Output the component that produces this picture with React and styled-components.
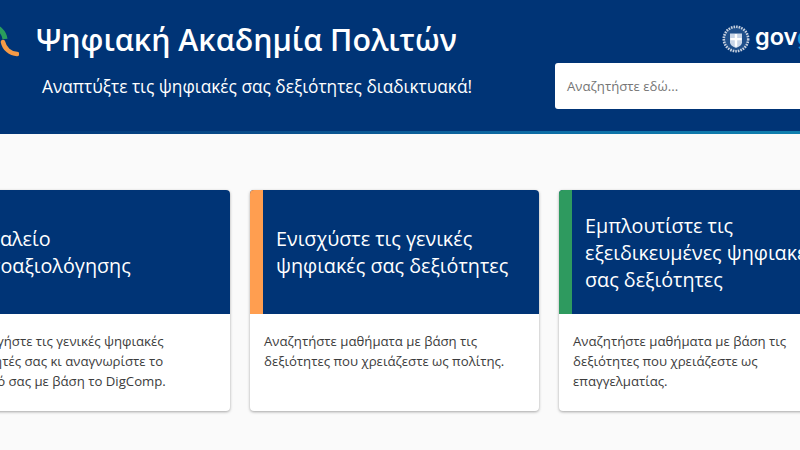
import React from "react";
import styled, { createGlobalStyle } from "styled-components";

const Global = createGlobalStyle`
  html, body { margin: 0; padding: 0; background: #fafafa; width: 800px; height: 450px; overflow: hidden; }
  body { font-family: "Open Sans", "Noto Sans", sans-serif; }
`;
const Viewport = styled.div`width: 800px; height: 450px; overflow: hidden; background: #fafafa;`;
const Header = styled.header`
  height: 131px;
  background: #003476;
  border-bottom: 3px solid;
  border-image: linear-gradient(90deg, #003476 0%, #0a4f8c 35%, #0d6ea6 70%, #0f7fae 100%) 1;
  overflow: hidden;
`;
const HeaderInner = styled.div`
  width: 907px;
  margin-left: -59px;
  display: flex;
  justify-content: space-between;
`;
const Brand = styled.div`display: flex; flex-direction: column; padding-top: 19px;`;
const TitleRow = styled.div`display: flex; align-items: center; gap: 17px; height: 42px; padding-left: 42px;`;
const Title = styled.h1`
  margin: 0; font-size: 30.3px; line-height: 42px; font-weight: 600; color: #fff; white-space: nowrap;
`;
const Tagline = styled.p`
  margin: 14px 0 0 101px; font-size: 17.3px; line-height: 24px; color: #fff; white-space: nowrap;
`;
const Side = styled.div`width: 294px; padding-top: 24px; margin-right: -1px;`;
const Gov = styled.div`display: flex; align-items: center; gap: 5px; padding-left: 167px; height: 30px;`;
const GovText = styled.span`
  font-family: "Inter", "Open Sans", sans-serif; font-size: 23.5px; line-height: 28px; font-weight: 600; color: #fff; margin-top: -5px;
  & > b { color: #1a9ad6; font-weight: 600; }
`;
const Search = styled.div`
  margin-top: 9px; height: 46px; background: #fff; border-radius: 3px; display: flex; align-items: center;
  padding-left: 12px; font-size: 13.2px; color: #757575;
`;
const Cards = styled.main`
  width: 907px; margin: 56px 0 0 -59px; display: grid; grid-template-columns: repeat(3, 289px); gap: 20px;
`;
const Card = styled.article`
  height: 221px; background: #fff; border-radius: 4px; overflow: hidden;
  box-shadow: 0 1px 3px rgba(0,0,0,.35);
  display: flex; flex-direction: column;
`;
const CardTop = styled.div`
  height: 124px; background: #003476; border-left: 13px solid ${p => p.$accent};
  display: flex; align-items: center; padding-left: 13px; box-sizing: border-box;
`;
const CardTitle = styled.h2`
  margin: 0; font-size: 19.75px; line-height: 27px; font-weight: 400; color: #fff; white-space: nowrap;
`;
const CardBody = styled.p`
  margin: 0; padding: 17px 14px; font-size: 13.2px; line-height: 20px; color: #3c3c3c; white-space: nowrap;
`;

const Logo = () => (
  <svg width="36" height="42" viewBox="0 0 36 42" style={{ flexShrink: 0 }}>
    <path d="M8 7 A 15 15 0 0 1 22 20" fill="none" stroke="#2a9d5c" strokeWidth="5" />
    <path d="M20 23 A 15 15 0 0 0 34 35" fill="none" stroke="#f59a46" strokeWidth="4.5" strokeLinecap="round" />
  </svg>
);
const Emblem = () => (
  <svg width="28" height="28" viewBox="0 0 28 28" style={{ flexShrink: 0 }}>
    <circle cx="14" cy="14" r="12.2" fill="#1f4f8a" stroke="#c6d0df" strokeWidth="2.6" strokeDasharray="1.6 1" />
    <path d="M8 8.5h12v9q0 3-6 5.5q-6-2.500-6-5.500z" fill="#c9d6e8" />
    <path d="M12.800 9h2.400v4h4.500v2.300h-4.500v6.500h-2.400v-6.500h-4.500v-2.300h4.500z" fill="#fff" />
  </svg>
);

const data = [
  { accent: "#003476", title: ["Εργαλείο", "αυτοαξιολόγησης"], body: ["Αξιολογήστε τις γενικές ψηφιακές", "δεξιότητές σας κι αναγνωρίστε το", "επίπεδό σας με βάση το DigComp."] },
  { accent: "#ff9e50", title: ["Ενισχύστε τις γενικές", "ψηφιακές σας δεξιότητες"], body: ["Αναζητήστε μαθήματα με βάση τις", "δεξιότητες που χρειάζεστε ως πολίτης."] },
  { accent: "#2e9a5f", title: ["Εμπλουτίστε τις", "εξειδικευμένες ψηφιακές", "σας δεξιότητες"], body: ["Αναζητήστε μαθήματα με βάση τις", "δεξιότητες που χρειάζεστε ως", "επαγγελματίας."] },
];

export default function App() {
  return (
    <Viewport>
      <Global />
      <Header>
        <HeaderInner>
          <Brand>
            <TitleRow>
              <Logo />
              <Title>Ψηφιακή Ακαδημία Πολιτών</Title>
            </TitleRow>
            <Tagline>Αναπτύξτε τις ψηφιακές σας δεξιότητες διαδικτυακά!</Tagline>
          </Brand>
          <Side>
            <Gov><Emblem /><GovText>gov<b>gr</b></GovText></Gov>
            <Search>Αναζητήστε εδώ...</Search>
          </Side>
        </HeaderInner>
      </Header>
      <Cards>
        {data.map((c, i) => (
          <Card key={i}>
            <CardTop $accent={c.accent}>
              <CardTitle>{c.title.map((l, j) => <div key={j}>{l}</div>)}</CardTitle>
            </CardTop>
            <CardBody>{c.body.map((l, j) => <div key={j}>{l}</div>)}</CardBody>
          </Card>
        ))}
      </Cards>
    </Viewport>
  );
}
